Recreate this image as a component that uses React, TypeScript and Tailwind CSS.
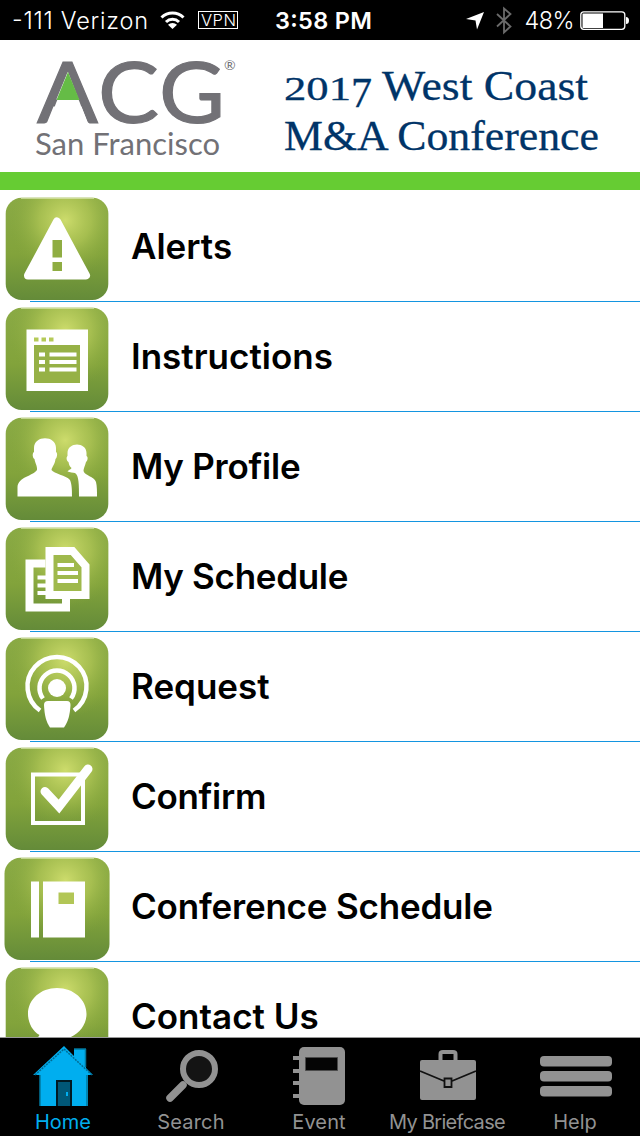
import type { ReactNode } from "react";

function Tile({ id, wide, children }: { id: string; wide?: boolean; children: ReactNode }) {
  const x = wide ? 4.5 : 5.7;
  const width = wide ? 105 : 102.6;

  return (
    <svg viewBox="0 2 110 109" className="h-[109px] w-[110px] shrink-0">
      <defs>
        <linearGradient id={`${id}-base`} x1="0" y1="0" x2="0" y2="1">
          <stop offset="0" stopColor="#8aaa45" />
          <stop offset="0.55" stopColor="#82a33b" />
          <stop offset="1" stopColor="#648b39" />
        </linearGradient>
        <radialGradient id={`${id}-glow`} cx="0.58" cy="0.22" r="0.56">
          <stop offset="0" stopColor="#cddc6c" />
          <stop offset="0.45" stopColor="#b0c655" stopOpacity="0.75" />
          <stop offset="1" stopColor="#85a63c" stopOpacity="0" />
        </radialGradient>
      </defs>
      <rect x={x} y="7.7" width={width} height="102.3" rx="16" fill={`url(#${id}-base)`} />
      <rect x={x} y="7.7" width={width} height="102.3" rx="16" fill={`url(#${id}-glow)`} />
      <path d="M21 8.3H94" stroke="#dce7b4" strokeOpacity="0.7" strokeWidth="1.2" />
      {children}
    </svg>
  );
}

const icons: Record<string, ReactNode> = {
  alerts: (
    <>
      <path d="M57 31.5L86 85.5H28Z" fill="#fff" stroke="#fff" strokeWidth="8" strokeLinejoin="round" />
      <path d="M52.5 50H62V67.5H52.5ZM52.5 72H62V81H52.5Z" fill="#8fad42" />
    </>
  ),
  instructions: (
    <>
      <path d="M26.5 29.5H88V91H26.5Z" fill="#fff" />
      <path d="M34 37.5h4.5v4H34zM41.5 37.5H46v4h-4.5zM49 37.5h4.5v4H49z" fill="#b5ca58" />
      <path d="M34 45H80V83H34Z" fill="#96b146" />
      <path d="M39 52.5h6v4h-6zM39 60h6v4h-6zM39 67.5h6v4h-6zM49.5 52.5h27v4h-27zM49.5 60h27v4h-27zM49.5 67.5h27v4h-27z" fill="#fff" />
    </>
  ),
  profile: (
    <>
      <path
        d="M34 38C34 25 56 25 56 38V42C58 43 57 48 55.5 49C55 54 52 57 51.5 60C54 64 66 65 70 70C72 74 72 82 72 86.5H17.5V77C18 67 33 66 37 60C37.500 56 35 53 34.500 49C32.500 48 32 43 34 42Z"
        fill="#fff"
      />
      <path
        d="M67.5 43C67.5 31.500 86.500 31.500 86.500 43V46C88.500 47 87.500 51 86 52C85 56 83.500 58 83.500 61C85 66 94 66 96 72C97 76 97 82 97 86.500H79C79 76 79 65 75 63C73 62.500 70 62.500 67.500 61.500C69 59.500 71 59.500 71.500 58C69 56 69 54 68.500 52C66.500 51 66 47 67.500 46Z"
        fill="#fff"
      />
    </>
  ),
  schedule: (
    <>
      <path d="M45.5 43.5H29.5V87.5H66V78" fill="none" stroke="#fff" strokeWidth="8" />
      <path d="M37.5 57.5h10M37.5 65.5h10M37.5 73h10" stroke="#fff" strokeWidth="4" />
      <path d="M49.5 31H72.5L85.5 46V75H49.5Z" fill="#9fb94c" stroke="#fff" strokeWidth="8" />
      <path d="M57.5 45H74M57.5 53H78M57.5 61H78" stroke="#fff" strokeWidth="4" />
    </>
  ),
  request: (
    <>
      <path d="M40 80.5A29.5 29.5 0 1 1 74 80.5" fill="none" stroke="#fff" strokeWidth="4.5" />
      <path d="M43 68.500A17.500 17.500 0 1 1 71 68.500" fill="none" stroke="#fff" strokeWidth="4.5" />
      <circle cx="57" cy="58" r="9" fill="#fff" />
      <path d="M48 71H67Q70.5 71 70.5 75C70 85 68 92 64 97.5H50C46 92 44.5 85 44 75Q44 71 48 71Z" fill="#fff" />
    </>
  ),
  confirm: (
    <>
      <path d="M33 34.5H83V83H33Z" fill="none" stroke="#fff" strokeWidth="4" />
      <path d="M45 51.5L59 66.5L88 29" fill="none" stroke="#fff" strokeWidth="9" strokeLinecap="round" />
    </>
  ),
  conference: (
    <>
      <path d="M31 31.5H39V87.5H31ZM43 31.5H85V87.5H43Z" fill="#fff" />
      <path d="M58.5 42.5H74V54H58.5Z" fill="#b2c656" />
    </>
  ),
  contact: (
    <path d="M57 28C73.5 28 86.5 39.5 86.5 54S73.5 80 57 80C53 80 48 79 45 78L35 82L39.5 75C32 71 28 62 28 54C28 39.5 40.5 28 57 28Z" fill="#fff" />
  ),
};

const rows = [
  { id: "alerts", label: "Alerts", tracking: "tracking-normal" },
  { id: "instructions", label: "Instructions", tracking: "tracking-normal" },
  { id: "profile", label: "My Profile", tracking: "tracking-[-0.25px]" },
  { id: "schedule", label: "My Schedule", tracking: "tracking-[-0.3px]" },
  { id: "request", label: "Request", tracking: "tracking-normal" },
  { id: "confirm", label: "Confirm", tracking: "tracking-[-0.3px]" },
  { id: "conference", label: "Conference Schedule", tracking: "tracking-[-0.2px]" },
  { id: "contact", label: "Contact Us", tracking: "tracking-normal" },
];

function StatusBar() {
  return (
    <svg viewBox="0 0 640 40" className="block h-10 w-full shrink-0 bg-black" fontFamily="Inter, sans-serif" fill="#fff">
      <text x="12" y="28.5" fontSize="23.5" fontWeight="300" textLength="136">-111 Verizon</text>
      <g fill="none" stroke="#fff" strokeWidth="3">
        <path d="M161.5 17.5a15.5 15.5 0 0 1 22 0" />
        <path d="M166 22a9.3 9.3 0 0 1 13 0" />
      </g>
      <path d="M168 24.8a6.5 6.5 0 0 1 9 0L172.5 29Z" />
      <rect x="198.5" y="11.5" width="39" height="17" fill="none" stroke="#fff" />
      <text x="201" y="26" fontSize="16.5" fontWeight="300" textLength="35">VPN</text>
      <text x="275" y="28.5" fontSize="23.5" fontWeight="600" textLength="97">3:58 PM</text>
      <path d="M484 12L477 29.5L475.5 20.5L466 19Z" />
      <path d="M497 14L510.500 26.500L504 32.500V8.500L510.500 14L497 26.500" fill="none" stroke="#6b6b6b" strokeWidth="1.8" />
      <text x="524.5" y="28.5" fontSize="23.5" fontWeight="300" textLength="50">48%</text>
      <rect x="580.8" y="11.8" width="44" height="17.5" rx="3" fill="none" stroke="#fff" strokeWidth="1.3" />
      <path d="M582.5 13.5H603V28H582.5ZM626 17q3 0 3 3.5t-3 3.5Z" />
    </svg>
  );
}

function Banner() {
  return (
    <header className="h-[150px] shrink-0 border-b-[18px] border-[#66cc33] bg-white">
      <svg viewBox="0 40 640 132" className="block h-[132px] w-full">
        <g fill="#727176" fontFamily="Lato, sans-serif">
          <g stroke="#727176" strokeWidth="1.2" fontSize="85">
            <text x="37" y="122.5" textLength="61" lengthAdjust="spacingAndGlyphs">A</text>
            <text x="98" y="122.5" textLength="61" lengthAdjust="spacingAndGlyphs">C</text>
            <text x="159" y="122.500" textLength="66" lengthAdjust="spacingAndGlyphs">G</text>
          </g>
          {/* the green wedge takes the place of the crossbar */}
          <path d="M68 72L88 124H48Z" fill="#fff" />
          <path d="M68 72L79.5 100H56.5Z" fill="#65bc46" />
          <text x="35" y="155" fontSize="30" textLength="185" lengthAdjust="spacingAndGlyphs">San Francisco</text>
          <text x="224" y="69.5" fontSize="14">®</text>
        </g>
        <g fill="#003468" stroke="#003468" strokeWidth="0.3" fontFamily="'Liberation Serif', serif">
          <text x="284" y="99.5" fontSize="34" textLength="67" lengthAdjust="spacingAndGlyphs">
            201
          </text>
          <text x="351" y="106.5" fontSize="43" textLength="21" lengthAdjust="spacingAndGlyphs">7</text>
          <text x="382" y="99.5" fontSize="43" textLength="206" lengthAdjust="spacingAndGlyphs">West Coast</text>
          <text x="284" y="149.5" fontSize="43" textLength="315" lengthAdjust="spacingAndGlyphs">M&amp;A Conference</text>
        </g>
      </svg>
    </header>
  );
}

function HomeIcon() {
  return (
    <svg viewBox="1 0 64 64" className="h-16 w-16">
      <path d="M43 5H55V24L62 31H57V62H9V31H2L33 2L43 12Z" fill="#00aeef" />
      <path d="M4 31L33 5L61 31" fill="none" stroke="#006c94" strokeWidth="1.5" strokeDasharray="2 1" />
      <path d="M43 5H55M9 31V62M56 31V62M54.5 5V23" fill="none" stroke="#00789f" strokeWidth="1.5" />
      <path d="M25 36H41V62H25Z" fill="#001923" />
      <path d="M27 38H39V62H27Z" fill="#005777" />
      <path d="M35 48h2v4h-2z" fill="#00aeef" />
    </svg>
  );
}

function SearchIcon() {
  return (
    <svg viewBox="1 0 64 64" className="h-16 w-16">
      <path d="M24 41L11 54" stroke="#929292" strokeWidth="7.500" strokeLinecap="round" />
      <circle cx="40" cy="25" r="16" fill="#141414" stroke="#929292" strokeWidth="6" />
    </svg>
  );
}

function EventIcon() {
  return (
    <svg viewBox="1 0 64 64" className="h-16 w-16">
      <rect x="12" y="3" width="46" height="58" rx="5" fill="#929292" />
      <path d="M6 14h9M6 27h9M6 39h9M6 52h9" stroke="#929292" strokeWidth="4" />
      <path d="M18.5 13.5H50.5V26.5H18.5Z" fill="#050505" stroke="#4a4a4a" />
    </svg>
  );
}

function BriefcaseIcon() {
  return (
    <svg viewBox="0 0 64 64" className="h-16 w-16">
      <path d="M24.5 18V10Q24.5 8 27 8H37Q39.5 8 39.5 10V18" fill="none" stroke="#929292" strokeWidth="4" />
      <rect x="4" y="16" width="56" height="40" rx="2" fill="#929292" />
      <path d="M4 27L28 37M36 37L60 27M28.5 34.5H35.5V43H28.5Z" fill="none" stroke="#111" strokeWidth="1.800" />
    </svg>
  );
}

function HelpIcon() {
  return (
    <svg viewBox="0 0 76 64" className="h-16 w-[76px]">
      <g fill="#929292">
        <rect x="2" y="12" width="72" height="10.5" rx="4" />
        <rect x="2" y="27" width="72" height="10.5" rx="4" />
        <rect x="2" y="42" width="72" height="10.5" rx="4" />
      </g>
    </svg>
  );
}

const tabs = [
  { label: "Home", icon: <HomeIcon />, text: "text-[#00aeef] tracking-normal" },
  { label: "Search", icon: <SearchIcon />, text: "text-[#929292] tracking-[0.2px]" },
  { label: "Event", icon: <EventIcon />, text: "text-[#929292] tracking-[0.1px]" },
  { label: "My Briefcase", icon: <BriefcaseIcon />, text: "text-[#929292] tracking-[-0.7px]" },
  { label: "Help", icon: <HelpIcon />, text: "text-[#929292] tracking-normal" },
];

export default function App() {
  return (
    <div className="flex h-[1136px] w-[640px] flex-col overflow-hidden bg-white font-['Inter',sans-serif]">
      <StatusBar />
      <Banner />

      <main className="min-h-0 flex-1 overflow-hidden pt-0.5">
        {rows.map((row) => (
          <div key={row.id}>
            <div className="flex h-[109px] items-center">
              <Tile id={row.id} wide={row.id === "conference"}>{icons[row.id]}</Tile>
              <span className={`ml-[21px] text-[35px] font-semibold whitespace-nowrap text-black ${row.tracking}`}>
                {row.label}
              </span>
            </div>
            <div className="ml-[30px] h-px bg-[#1495e0]" />
          </div>
        ))}
      </main>

      <nav className="grid h-[99px] shrink-0 grid-cols-5 border-t border-[#999] bg-black">
        {tabs.map((tab) => (
          <button key={tab.label} className="flex flex-col items-center pt-1.5">
            {tab.icon}
            <span className={`mt-px mr-0.5 text-[20px] leading-[26px] whitespace-nowrap ${tab.text}`}>{tab.label}</span>
          </button>
        ))}
      </nav>
    </div>
  );
}
